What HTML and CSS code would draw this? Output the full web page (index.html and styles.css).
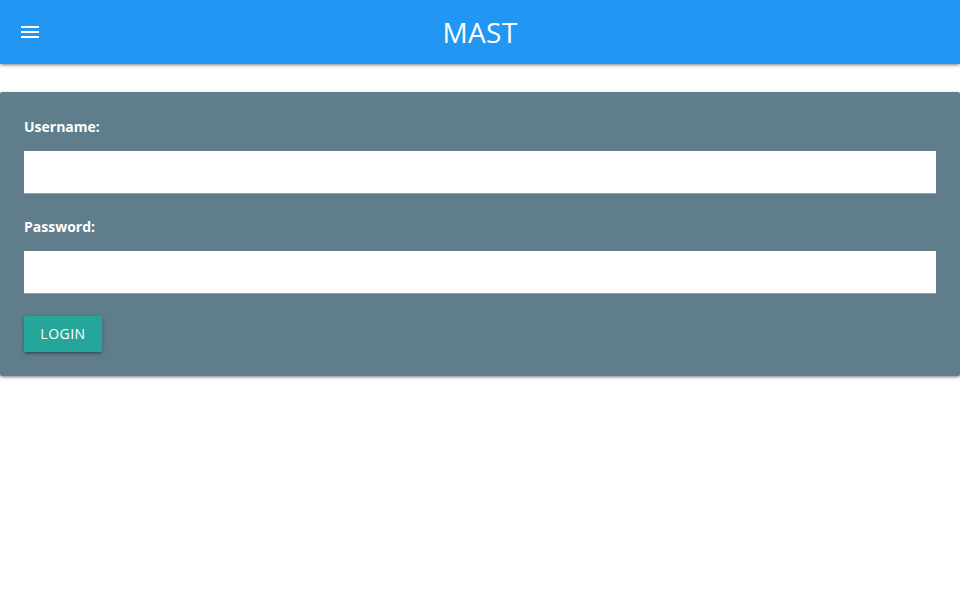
FILE: index.html
```html
<!DOCTYPE html>
<html>
<head>
<meta charset="utf-8">
<link rel="stylesheet" href="styles.css">
</head>
<body>
<header class="topbar">
  <button class="menu-btn" aria-label="menu">
    <svg viewBox="0 0 24 24" width="24" height="24"><path fill="#fff" d="M3 18h18v-2H3v2zm0-5h18v-2H3v2zm0-7v2h18V6H3z"/></svg>
  </button>
  <div class="brand">MAST</div>
</header>
<main class="content">
  <form class="card">
    <label class="label" for="u">Username:</label>
    <input class="field" id="u" type="text">
    <label class="label second" for="p">Password:</label>
    <input class="field" id="p" type="password">
    <div class="actions"><button type="button" class="btn">Login</button></div>
  </form>
</main>
</body>
</html>
```
FILE: styles.css
```css
html, body { margin: 0; padding: 0; background: #fff; }
body { font-family: "Open Sans", "Liberation Sans", sans-serif; width: 960px; height: 600px; overflow: hidden; }
.topbar {
  height: 64px; background: #2196F3; position: relative;
  display: flex; align-items: center; justify-content: center;
  box-shadow: 0 2px 2px 0 rgba(0,0,0,.14), 0 3px 1px -2px rgba(0,0,0,.12), 0 1px 5px 0 rgba(0,0,0,.2);
  z-index: 2;
}
.menu-btn {
  position: absolute; left: 18px; top: 20px; width: 24px; height: 24px;
  padding: 0; margin: 0; border: 0; background: none; display: block;
}
.menu-btn svg { display: block; }
.brand { color: #fff; font-size: 28px; line-height: 64px; font-weight: 400; letter-spacing: .3px; }
.content { padding-top: 28px; }
.card {
  background: #607D8B; border-radius: 2px; padding: 24px;
  display: flex; flex-direction: column;
  box-shadow: 0 2px 2px 0 rgba(0,0,0,.14), 0 3px 1px -2px rgba(0,0,0,.12), 0 1px 5px 0 rgba(0,0,0,.2);
}
.label { color: #fff; font-weight: 700; font-size: 14px; line-height: 22px; margin-bottom: 13px; }
.label.second { margin-top: 22px; margin-bottom: 13px; }
.field {
  box-sizing: border-box; height: 43px; width: 100%; margin: 0;
  background: #fff; border: 0; border-bottom: 1px solid #9e9e9e; outline: none;
  font-family: inherit; font-size: 16px; padding: 0 8px; border-radius: 0;
}
.actions { margin-top: 22px; display: flex; }
.btn {
  height: 36px; width: 78px; padding: 0 0 2px; border: 0; border-radius: 2px;
  background: #26A69A; color: #fff; font-family: inherit; font-size: 14px;
  text-transform: uppercase; letter-spacing: .5px;
  display: flex; align-items: center; justify-content: center;
  box-shadow: 0 2px 2px 0 rgba(0,0,0,.14), 0 3px 1px -2px rgba(0,0,0,.12), 0 1px 5px 0 rgba(0,0,0,.2);
}
```
